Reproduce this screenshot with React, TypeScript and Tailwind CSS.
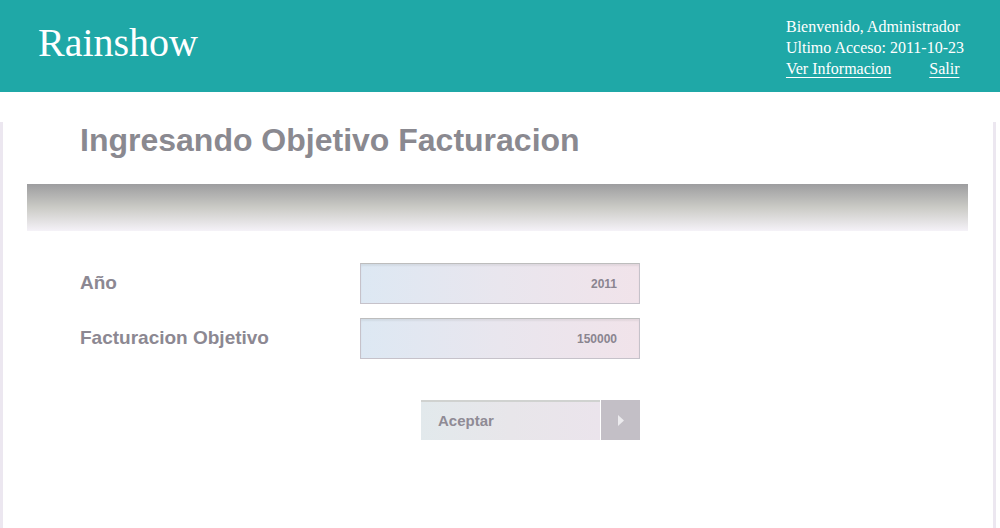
import React from 'react'

const serif = { fontFamily: '"Liberation Serif", "Times New Roman", serif' }
const sans = { fontFamily: '"Liberation Sans", Arial, sans-serif' }

function Field({ label, value }: { label: string; value: string }) {
  return (
    <div className="flex items-center">
      <div className="w-[280px] text-[19px] font-bold text-[#8c8892]">{label}</div>
      <div className="w-[280px] h-[41px] border border-[#c6c2ca] border-t-[#bdbdbd] bg-gradient-to-r from-[#dde8f3] via-[#e9e6ee] to-[#f1e3ea] shadow-[inset_0_2px_2px_rgba(0,0,0,0.06)] flex items-center justify-end pr-[22px] text-[12px] font-bold text-[#8a8590]">
        {value}
      </div>
    </div>
  )
}

export default function App() {
  return (
    <div className="w-[1000px] h-[528px] bg-white overflow-hidden" style={sans}>
      {/* Header */}
      <div className="h-[92px] bg-[#1fa8a7] flex justify-between text-white">
        <div className="pl-[38px] pt-[20px] text-[40px] leading-[46px]" style={serif}>
          Rainshow
        </div>
        <div className="pr-[36px] pt-[16px] text-[16px] leading-[21px]" style={serif}>
          <div>Bienvenido, Administrador</div>
          <div>Ultimo Acceso: 2011-10-23</div>
          <div className="flex gap-[38px]">
            <a className="underline underline-offset-[3px]">Ver Informacion</a>
            <a className="underline underline-offset-[3px]">Salir</a>
          </div>
        </div>
      </div>

      {/* Body */}
      <div className="relative h-[436px] border-l-[3px] border-[#ece7f0]">
        <div className="absolute right-[4px] top-0 bottom-0 w-[3px] bg-[#ece7f0]" />
        <h1 className="ml-[77px] mt-[30px] text-[32px] leading-[36px] font-bold text-[#8a8990]">
          Ingresando Objetivo Facturacion
        </h1>
        <div className="ml-[24px] mt-[26px] w-[941px] h-[47px] bg-gradient-to-b from-[#9d9d9f] via-[#cbcbc6] to-[#f5f2f8]" />

        <div className="ml-[77px] mt-[32px] flex flex-col gap-[14px]">
          <Field label="Año" value="2011" />
          <Field label="Facturacion Objetivo" value="150000" />
        </div>

        <div className="ml-[418px] mt-[41px] flex h-[40px] w-[219px] gap-[1px]">
          <button className="flex-1 border-t-2 border-[#d0d2d0] bg-gradient-to-r from-[#e2e9ec] via-[#e8e6ea] to-[#ebe4ec] text-left pl-[17px] text-[15px] font-bold text-[#8f8b95]">
            Aceptar
          </button>
          <div className="w-[39px] bg-[#c3bfc6] flex items-center justify-center">
            <svg width="8" height="13" viewBox="0 0 8 13">
              <path d="M1 1 L7 6.5 L1 12 Z" fill="#ecebee" />
            </svg>
          </div>
        </div>
      </div>
    </div>
  )
}
